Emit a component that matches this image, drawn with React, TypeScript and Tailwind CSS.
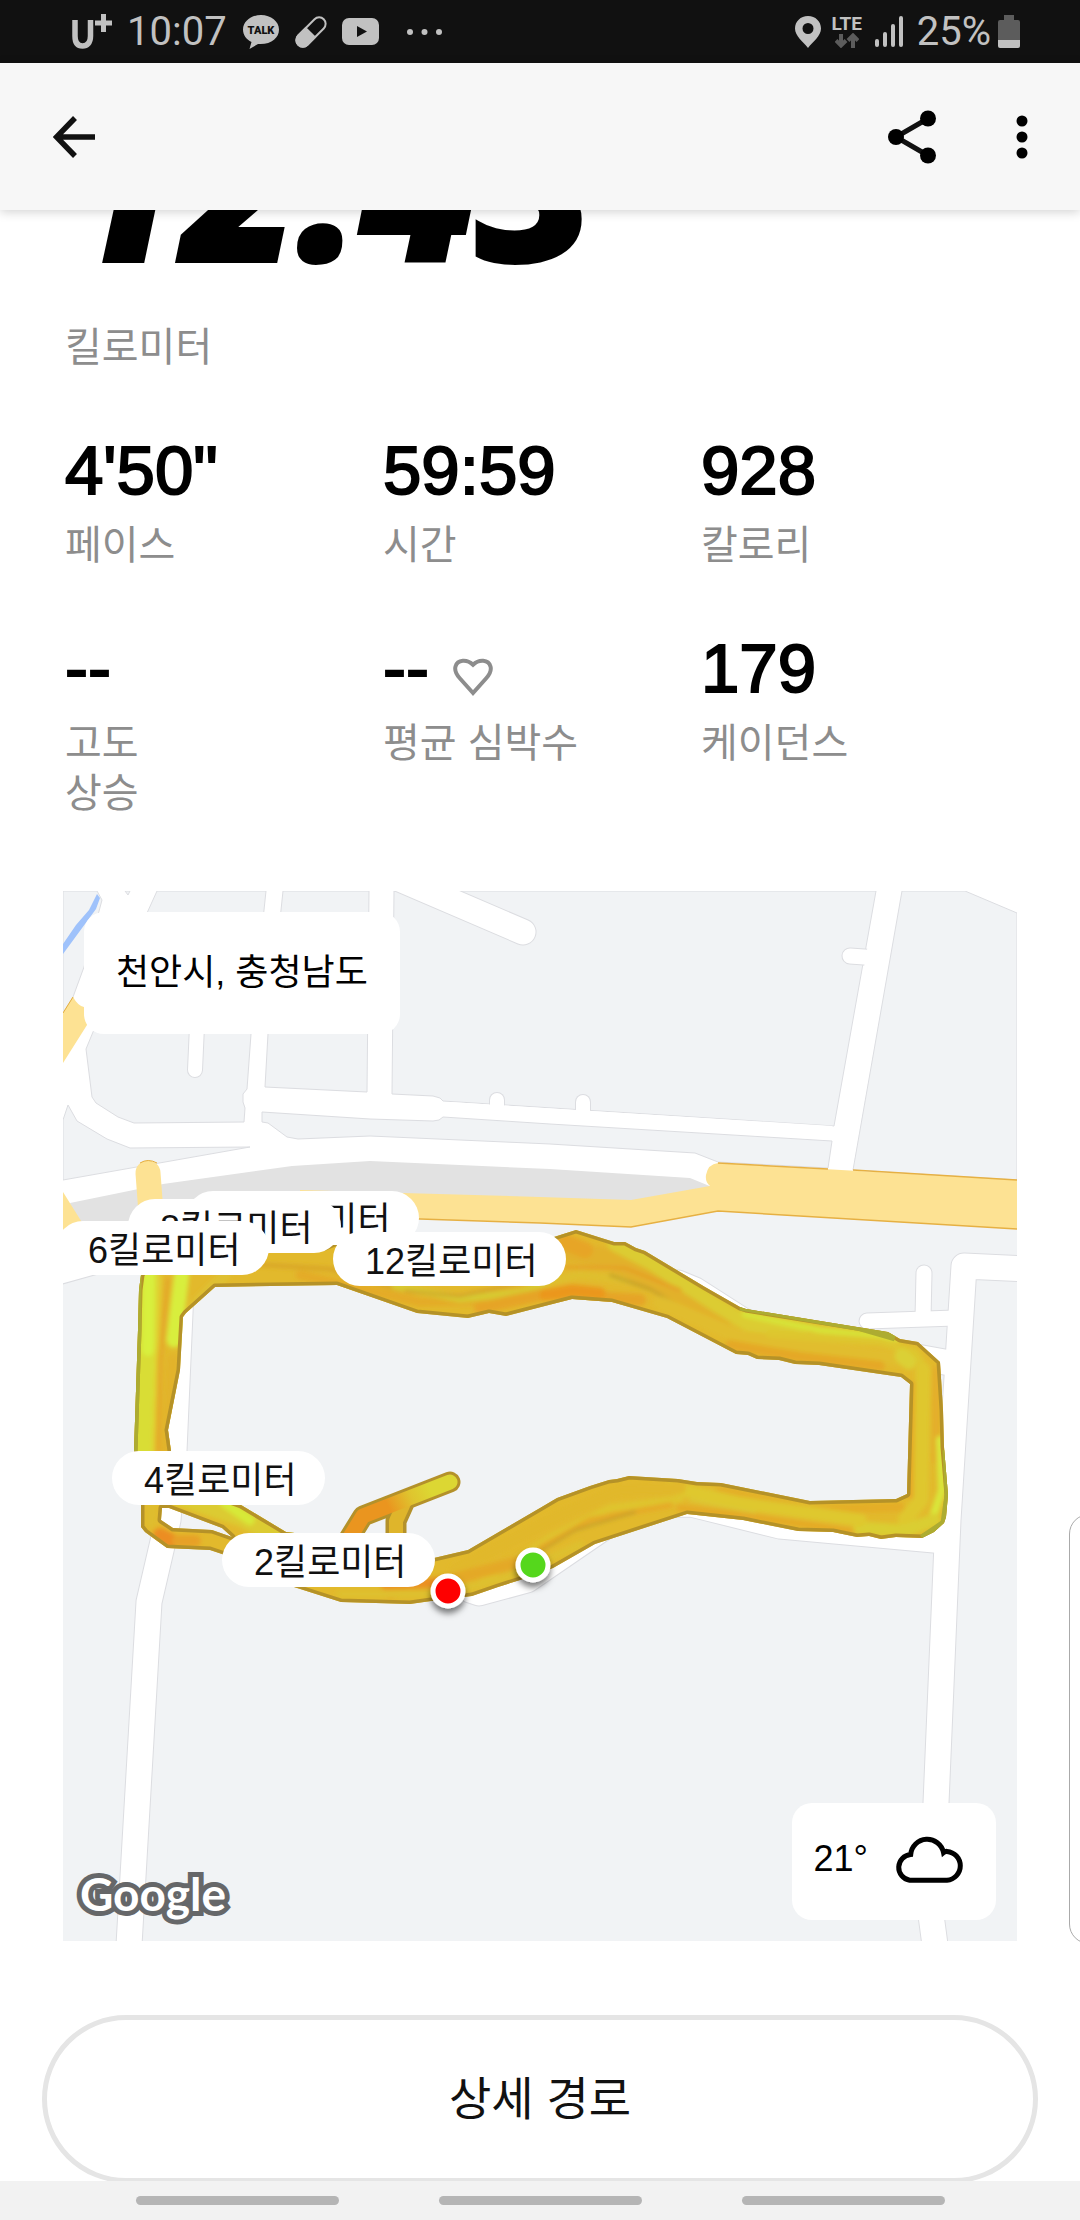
import type { ReactNode } from 'react';

type Stat = {
  value: string;
  label: string;
  icon?: ReactNode;
};

type Marker = {
  x: number;
  y: number;
  text: string;
};

const MAP_W = 954;
const MAP_H = 1050;

const stats: Stat[] = [
  { value: '4\'50"', label: '페이스' },
  { value: '59:59', label: '시간' },
  { value: '928', label: '칼로리' },
  { value: '--', label: '고도\n상승' },
  { value: '--', label: '평균 심박수', icon: <HeartIcon /> },
  { value: '179', label: '케이던스' },
];

// later markers are stacked above earlier ones
const markers: Marker[] = [
  { x: 123, y: 300, text: '10킬로미터' },
  { x: 65, y: 308, text: '8킬로미터' },
  { x: -7, y: 330, text: '6킬로미터' },
  { x: 49, y: 560, text: '4킬로미터' },
  { x: 159, y: 642, text: '2킬로미터' },
  { x: 270, y: 341, text: '12킬로미터' },
];

const blocks = [
  '63,891 97,891 102,900 84,967 73,997 63,1013',
  '125,891 130,891 128,895',
  '157,891 266,891 251,1034 247,1089 243,1094 243,1102 245,1108 244,1122 134,1123 118,1117 96,1103 92,1097 86,1049 93,1032',
  '283,891 369,891 367,1092 265,1087 268,1034',
  '394,891 876,891 834,1126 443,1101 440,1098 433,1096 392,1094',
  '902,891 965,891 1017,913 1017,1180 853,1170',
  '68,1105 77,1121 107,1139 130,1148 250,1147 63,1180 63,1120',
  '262,1112 370,1119 433,1121 439,1120 443,1117 550,1124 832,1141 828,1168 718,1162 695,1153 550,1144 370,1136 298,1139 287,1137 268,1123 262,1122',
];

const roads = [
  { d: 'M395 877L523 932', w: 25 },
  { d: 'M197 1026L195 1070', w: 14 },
  { d: 'M497 1100V1108', w: 14 },
  { d: 'M583 1102V1113', w: 14 },
  { d: 'M850 956L878 958', w: 15 },
  { d: 'M50 1274L100 1260L160 1255', w: 25 },
  { d: 'M181 1290L174 1451L168 1520L149 1602L129 1945', w: 25 },
  { d: 'M470 1590L479 1593L527 1580L600 1530L640 1505L691 1504L780 1526L945 1541', w: 25 },
  { d: 'M678 1283L695 1290L745 1322L850 1345L950 1363', w: 25 },
  { d: 'M924 1273L923 1318', w: 15 },
  { d: 'M867 1321L955 1318', w: 15 },
  { d: 'M1025 1269L964 1266L948 1520L936 1803L931 1915L935 1945', w: 25 },
];

const routeOutline =
  'M141 1275L139 1290L138 1330L134 1451L141 1505L141 1527L145 1532L167 1548L210 1550L222 1554L294 1587L341 1602L410 1604L431 1601L472 1596L498 1587L520 1580L553 1568L595 1544L687 1514L743 1520L798 1531L833 1532L857 1537L869 1536L881 1539L896 1537L922 1538L934 1532L944 1523L946 1517L948 1495L944 1447L943 1410L940 1362L918 1342L900 1339L888 1332L857 1327L746 1309L740 1307L705 1287L645 1251L636 1248L625 1242L614 1242L576 1230L554 1237L500 1250L440 1246L342 1240L325 1247L160 1240Z' +
  'M215 1287L337 1285L417 1313L468 1318L489 1313L506 1316L572 1299L612 1302L667 1318L736 1354L748 1355L757 1359L779 1360L795 1364L819 1365L901 1377L910 1384L907 1494L896 1499L810 1501L721 1483L697 1482L678 1479L629 1476L617 1479L609 1480L590 1486L557 1498L540 1508L468 1550L434 1558L303 1534L286 1532L241 1505L200 1490L171 1451L168 1430L180 1370L183 1317L186 1313Z' +
  'M162 1508L169 1508L222 1528L232 1537L212 1530L173 1528L161 1520Z';

const streaks = [
  { d: 'M148 1265L146 1340L142 1451', w: 20, c: '#d9dd36' },
  { d: 'M149 1270L148 1350', w: 12, c: '#d8f03e' },
  { d: 'M160 1275L153 1460', w: 3, c: '#e2d332' },
  { d: 'M168 1280L160 1360L158 1451', w: 5, c: '#e4a929' },
  { d: 'M182 1272L174 1340', w: 15, c: '#d8ee3e' },
  { d: 'M173 1360L168 1451', w: 12, c: '#e2b32b' },
  { d: 'M195 1305L225 1275', w: 12, c: '#dfc030' },
  { d: 'M250 1264L330 1269L400 1290', w: 4, c: '#d8a427' },
  { d: 'M300 1275L420 1302L520 1300', w: 9, c: '#e4ab28' },
  { d: 'M395 1286L460 1299L520 1293L560 1278', w: 7, c: '#d7ca31' },
  { d: 'M405 1291L460 1296L530 1281', w: 2, c: '#ce9125' },
  { d: 'M480 1308L545 1294L640 1300', w: 12, c: '#e6a426' },
  { d: 'M545 1295L572 1290L600 1293', w: 11, c: '#eb971f' },
  { d: 'M545 1282L580 1275L640 1282L700 1312', w: 7, c: '#dfbf2e' },
  { d: 'M560 1250L610 1258L660 1285L720 1325', w: 20, c: '#e2b12b' },
  { d: 'M565 1242L585 1250', w: 16, c: '#e7a526' },
  { d: 'M615 1244L650 1262L715 1304L750 1325L800 1335', w: 15, c: '#dccc31' },
  { d: 'M565 1267L625 1268L680 1290', w: 3, c: '#e69d25' },
  { d: 'M610 1275L650 1289L680 1306', w: 2, c: '#b49528' },
  { d: 'M660 1303L740 1337L850 1352L905 1360', w: 14, c: '#e1bd2d' },
  { d: 'M745 1314L820 1330L898 1338', w: 7, c: '#d7e338' },
  { d: 'M730 1345L800 1357L880 1366', w: 10, c: '#e5a827' },
  { d: 'M770 1334L880 1342L915 1352L927 1372', w: 8, c: '#dec62f' },
  { d: 'M902 1356L909 1362', w: 15, c: '#dbd034' },
  { d: 'M914 1385L911 1495', w: 8, c: '#e6a928' },
  { d: 'M923 1370L921 1500L905 1520', w: 15, c: '#dfc72f' },
  { d: 'M936 1370L936 1460', w: 8, c: '#e4ae29' },
  { d: 'M940 1440L942 1490L932 1520', w: 8, c: '#d9e63b' },
  { d: 'M934 1520L905 1531L860 1528', w: 13, c: '#dace31' },
  { d: 'M900 1507L810 1510L720 1491', w: 9, c: '#e4ad28' },
  { d: 'M670 1487L740 1503L860 1520', w: 13, c: '#dfc82f' },
  { d: 'M680 1508L760 1518L850 1531', w: 7, c: '#e5aa27' },
  { d: 'M690 1500L755 1512', w: 2, c: '#d9cc38' },
  { d: 'M455 1570L560 1515L620 1490L680 1488', w: 12, c: '#e1b82b' },
  { d: 'M480 1583L550 1538L610 1508L680 1499', w: 7, c: '#dfc52e' },
  { d: 'M540 1548L590 1520L670 1505', w: 5, c: '#e6a926' },
  { d: 'M536 1554L575 1530L635 1512', w: 2, c: '#b99a29' },
  { d: 'M390 1594L450 1580L520 1562', w: 12, c: '#e4a928' },
  { d: 'M385 1585L440 1582', w: 9, c: '#eb8f20' },
  { d: 'M340 1594L440 1594L500 1580L580 1545', w: 8, c: '#dec02e' },
  { d: 'M180 1495L240 1515L300 1545', w: 22, c: '#dccb31' },
  { d: 'M225 1503L250 1520', w: 10, c: '#d7e939' },
  { d: 'M152 1505L151 1522', w: 11, c: '#dfbd2e' },
  { d: 'M160 1535L172 1541', w: 14, c: '#ec8d20' },
  { d: 'M178 1541L195 1541', w: 12, c: '#e7a127' },
];

function HeartIcon() {
  return (
    <svg viewBox="0 0 40 38" className="ml-6 mt-4 h-[38px] w-[40px]" aria-hidden="true">
      <path
        d="M20 35L7 20.500C3 16 1.500 12 2.500 8.500C4.500 1.500 14 1 20 6.800C26 1 35.500 1.500 37.500 8.500C38.500 12 37 16 33 20.500Z"
        fill="none"
        stroke="#8d8d8d"
        strokeWidth="4"
      />
    </svg>
  );
}

function StatusBar() {
  return (
    <div className="flex h-[63px] shrink-0 items-center justify-between bg-[#111] pl-[71px] pr-[60px] font-['Roboto',sans-serif] text-[40px] leading-[48px] text-[#c1c1c1]">
      <div className="flex items-center">
        <svg viewBox="0 0 42 36" className="h-[36px] w-[42px]" role="img" aria-label="U+">
          <path d="M4 6V22C4 29 7 32 11.500 32C16 32 19.500 29 19.500 22V6" fill="none" stroke="currentColor" strokeWidth="5.500" />
          <path d="M24 9H41M32.500 0V18" stroke="currentColor" strokeWidth="5" />
        </svg>
        <span className="ml-[14px]">10:07</span>
        <svg viewBox="0 0 36 34" className="ml-4 h-[34px] w-[36px]" aria-hidden="true">
          <path d="M18 0C8 0 0 6.500 0 14.500C0 20 3.500 24.500 8.500 27L6.500 34L15 29C28 30 36 23 36 14.500C36 6.500 28 0 18 0Z" fill="currentColor" />
          <text x="18" y="19" textAnchor="middle" fontSize="11" fontWeight="900" fontFamily="Roboto, sans-serif" fill="#111">
            TALK
          </text>
        </svg>
        <svg viewBox="0 0 32 32" className="ml-4 h-[32px] w-[32px]" aria-hidden="true">
          <g transform="rotate(45 16 16)">
            <rect x="9.500" y="-2" width="13" height="36" rx="6.500" fill="none" stroke="currentColor" strokeWidth="2" />
            <path d="M8.500 16H23.500V27.500A7.500 7.500 0 0 1 8.500 27.500Z" fill="currentColor" />
          </g>
        </svg>
        <svg viewBox="0 0 37 27" className="ml-[15px] h-[27px] w-[37px]" aria-hidden="true">
          <rect width="37" height="27" rx="7" fill="currentColor" />
          <path d="M15 8L25 13.500L15 19Z" fill="#111" />
        </svg>
        <svg viewBox="0 0 35 6" className="ml-7 h-[6px] w-[35px]" fill="currentColor" aria-hidden="true">
          <circle cx="3" cy="3" r="3" />
          <circle cx="17.500" cy="3" r="3" />
          <circle cx="32" cy="3" r="3" />
        </svg>
      </div>
      <div className="flex items-center">
        <svg viewBox="0 0 26 32" className="h-[32px] w-[26px]" aria-hidden="true">
          <path fillRule="evenodd" d="M13 0C5.500 0 0 5.500 0 12.500C0 20 8 25.500 13 32C18 25.500 26 20 26 12.500C26 5.500 20.500 0 13 0ZM13 7A5.500 5.500 0 1 1 13 18A5.500 5.500 0 0 1 13 7Z" fill="currentColor" />
        </svg>
        <div className="ml-[10px] flex w-[32px] flex-col items-center">
          <span className="text-[19px] font-bold leading-[18px]">LTE</span>
          <svg viewBox="0 0 24 15" className="h-[15px] w-[24px]" fill="none" stroke="#5c5c5c" strokeWidth="4" aria-hidden="true">
            <path d="M6 1V12M1 7.500L6 12.500L11 7.500" />
            <path d="M18 15V3M13 7.500L18 2.500L23 7.500" />
          </svg>
        </div>
        <svg viewBox="0 0 28 31" className="ml-3 h-[31px] w-[28px]" fill="currentColor" aria-hidden="true">
          <rect y="23" width="4" height="8" rx="2" />
          <rect x="8" y="16" width="4" height="15" rx="2" />
          <rect x="16" y="8" width="4" height="23" rx="2" />
          <rect x="24" width="4" height="31" rx="2" />
        </svg>
        <span className="ml-[14px]">25%</span>
        <svg viewBox="0 0 22 33" className="ml-[7px] h-[33px] w-[22px]" aria-hidden="true">
          <path d="M6 0H16V5H20Q22 5 22 7V25H0V7Q0 5 2 5H6Z" fill="#5c5c5c" />
          <path d="M0 25H22V31Q22 33 20 33H2Q0 33 0 31Z" fill="currentColor" />
        </svg>
      </div>
    </div>
  );
}

function AppBar() {
  return (
    <header className="relative z-10 flex h-[147px] shrink-0 items-center justify-between bg-[#f7f7f7] pl-[43px] pr-[42px] text-[#111] shadow-[0_2px_10px_rgba(0,0,0,0.18)]">
      <button type="button" aria-label="뒤로" className="p-[10px]">
        <svg viewBox="0 0 42 42" className="h-[42px] w-[42px]" fill="none" stroke="currentColor" strokeWidth="5.500" aria-hidden="true">
          <path d="M22 2L3.500 21L22 40M4 21H42" />
        </svg>
      </button>
      <div className="flex items-center">
        <button type="button" aria-label="공유" className="p-[10px]">
          <svg viewBox="0 0 48 54" className="h-[54px] w-[48px]" aria-hidden="true">
            <path d="M40 8.500L8 27L40 45.500" fill="none" stroke="currentColor" strokeWidth="5" />
            <circle cx="40" cy="8.500" r="8" />
            <circle cx="8" cy="27" r="8" />
            <circle cx="40" cy="45.500" r="8" />
          </svg>
        </button>
        <button type="button" aria-label="더보기" className="ml-[60px] p-[10px]">
          <svg viewBox="0 0 12 44" className="h-[44px] w-[12px]" aria-hidden="true">
            <circle cx="6" cy="6" r="5.500" />
            <circle cx="6" cy="22" r="5.500" />
            <circle cx="6" cy="38" r="5.500" />
          </svg>
        </button>
      </div>
    </header>
  );
}

function MapCanvas() {
  return (
    <svg viewBox="63 891 954 1050" className="block h-full w-full" aria-hidden="true">
      <defs>
        <clipPath id="route">
          <path d={routeOutline} clipRule="evenodd" />
        </clipPath>
        <linearGradient id="spur" gradientUnits="userSpaceOnUse" x1="350" y1="1530" x2="450" y2="1480">
          <stop offset="0.400" stopColor="#ea951f" />
          <stop offset="0.620" stopColor="#dfc42e" />
          <stop offset="0.800" stopColor="#dcd733" />
        </linearGradient>
        <filter id="soften">
          <feGaussianBlur stdDeviation="2" />
        </filter>
      </defs>

      <rect x="63" y="891" width="954" height="1050" fill="#fff" />
      <g fill="#f1f3f5" stroke="#dcdde1" strokeWidth="1">
        {blocks.map((points) => (
          <polygon key={points} points={points} />
        ))}
        <path d="M55 1215L300 1213L540 1222L631 1226L718 1210L1025 1228V1950H55Z" />
      </g>

      <path d="M97 894L100 898L96 909L63 954V944L76 925L89 910Z" fill="#9fc2fb" />
      <path d="M70 1203L163 1184L292 1166L370 1161L550 1169L690 1178L712 1187L631 1203L300 1200V1240H80Z" fill="#e2e2e2" />
      <path d="M63 1013L73 997Q78 1006 84 1007L87 1025L63 1063Z" fill="#fde293" />
      <path d="M63 1013L73 997" stroke="#e5ad3c" />
      <path d="M63 1192L83 1224V1235H63Z" fill="#fde293" />
      <path d="M148 1173L153 1240" stroke="#fde293" strokeWidth="25" strokeLinecap="round" />
      <path d="M140 1163Q148 1158 157 1163" fill="none" stroke="#e5ad3c" />
      <path d="M300 1190L403 1193L540 1197L631 1200L710 1186Q705 1182 706 1175Q708 1164 718 1163L1017 1180V1229L718 1211L631 1227L540 1223L300 1215Z" fill="#fde293" />
      <path d="M718 1163L828 1169M853 1170L1017 1180M1017 1229L718 1211L631 1227L540 1223L300 1215" fill="none" stroke="#e6b043" strokeWidth="1.500" />

      <g fill="none" strokeLinecap="round" strokeLinejoin="round">
        {roads.map((road) => (
          <path key={road.d} d={road.d} stroke="#dcdde1" strokeWidth={road.w + 2} />
        ))}
        {roads.map((road) => (
          <path key={road.d} d={road.d} stroke="#fff" strokeWidth={road.w} />
        ))}
      </g>
      {/* clears the junctions where the short stubs run into a road */}
      <path d="M450 1109L832 1133" stroke="#fff" strokeWidth="14" />
      <path d="M889 891L841 1166" stroke="#fff" strokeWidth="23" />

      {/* side spur sits below the main loop */}
      <g fill="none" strokeLinecap="round" strokeLinejoin="round">
        <path d="M342 1550L363 1516L450 1482M396 1550V1521L405 1501" stroke="#b4912a" strokeWidth="21" />
        <path d="M396 1550V1521L405 1501" stroke="#dfb52b" strokeWidth="14" />
        <path d="M342 1550L363 1516L450 1482" stroke="url(#spur)" strokeWidth="15" />
      </g>
      <path d={routeOutline} fill="#e2b92c" fillRule="evenodd" />
      <g clipPath="url(#route)">
        <g fill="none" strokeLinecap="round" strokeLinejoin="round" filter="url(#soften)">
          {streaks.map((streak) => (
            <path key={streak.d} d={streak.d} stroke={streak.c} strokeWidth={streak.w} />
          ))}
        </g>
        <path d={routeOutline} fill="none" stroke="#b59228" strokeWidth="7" strokeLinejoin="round" />
        <path d="M138 1275L138 1330L134 1451M740 1307L857 1327L895 1338M946 1450L948 1495L944 1523L922 1538" fill="none" stroke="#adac31" strokeWidth="7" />
      </g>

      <text
        x="80"
        y="1911"
        fontSize="46"
        fontWeight="700"
        fontFamily="Lato, sans-serif"
        fill="#fff"
        stroke="#666769"
        strokeWidth="10"
        paintOrder="stroke"
      >
        Google
      </text>
    </svg>
  );
}

// start and finish pins
function RoutePins() {
  return (
    <svg viewBox="63 891 954 1050" className="absolute inset-0 h-full w-full" aria-hidden="true">
      <defs>
        <filter id="drop" x="-50%" y="-50%" width="200%" height="200%">
          <feDropShadow dx="0" dy="5" stdDeviation="3" floodOpacity="0.500" />
        </filter>
      </defs>
      <g filter="url(#drop)" stroke="#fff" strokeWidth="5">
        <circle cx="533" cy="1565" r="15" fill="#54d71a" />
        <circle cx="448" cy="1591" r="15" fill="#fe0000" />
      </g>
    </svg>
  );
}

function RouteMap() {
  return (
    <section aria-label="경로 지도" className="relative mt-[73px] aspect-[954/1050] w-full overflow-hidden text-[36px] leading-[48px]">
      <MapCanvas />
      {markers.map((marker) => (
        <div
          key={marker.text}
          className="absolute whitespace-nowrap rounded-full bg-white pl-8 pr-7 pt-[6px] text-[#111]"
          style={{ left: `${(marker.x / MAP_W) * 100}%`, top: `${(marker.y / MAP_H) * 100}%` }}
        >
          {marker.text}
        </div>
      ))}
      <RoutePins />
      <div className="absolute left-[21px] top-[21px] rounded-[20px] bg-white px-8 py-[37px]">천안시, 충청남도</div>
      <div className="absolute bottom-[21px] right-[21px] flex h-[117px] items-center rounded-[20px] bg-white pb-[6px] pl-[22px] pr-8">
        <span>21°</span>
        <svg viewBox="0 0 70 48" className="ml-[26px] h-[48px] w-[70px]" fill="none" stroke="currentColor" strokeWidth="5" role="img" aria-label="흐림">
          <path d="M15.700 45.300H53A14.500 14.500 0 0 0 53 16.400Q51 16.200 49.500 17.500A16.600 16.600 0 0 0 16.700 19.500A13 13 0 0 0 15.700 45.300Z" />
        </svg>
      </div>
    </section>
  );
}

export default function App() {
  return (
    <div className="relative flex h-screen flex-col overflow-hidden bg-white font-['Liberation_Sans','Noto_Sans_CJK_KR',sans-serif] text-black">
      <StatusBar />
      <AppBar />
      <main className="min-h-0 flex-1 overflow-y-auto [scrollbar-width:none]">
        <div className="px-[63px]">
          <h1 className="-mt-[126px] pl-[4px] font-['Open_Sans',sans-serif] text-[200px] font-extrabold italic leading-[200px] [-webkit-text-stroke:4px_black]">12.43</h1>
          <p className="ml-[2px] mt-[38px] text-[40px] leading-[50px] text-[#8d8d8d]">킬로미터</p>
          <dl className="-mr-[2px] ml-[2px] mt-[63px] grid grid-cols-3 gap-y-[63px]">
            {stats.map((stat) => (
              <div key={stat.label} className="flex flex-col-reverse justify-end">
                <dt className="mt-[13px] whitespace-pre-line text-[40px] leading-[50px] text-[#8d8d8d]">{stat.label}</dt>
                <dd className="flex items-center text-[69px] leading-[72px] [-webkit-text-stroke:2px_black]">
                  {stat.value}
                  {stat.icon}
                </dd>
              </div>
            ))}
          </dl>
          <RouteMap />
        </div>
        <div className="mt-[74px] px-[42px]">
          <button type="button" className="h-[168px] w-full rounded-full border-[5px] border-[#e5e5e5] text-[46px] text-[#111]">
            상세 경로
          </button>
        </div>
      </main>
      <nav className="flex h-[39px] shrink-0 items-center justify-center gap-[100px] bg-[#f2f2f2]">
        <button type="button" aria-label="최근 앱" className="h-[9px] w-[203px] rounded-full bg-[#b5b5b5]" />
        <button type="button" aria-label="홈" className="h-[9px] w-[203px] rounded-full bg-[#b5b5b5]" />
        <button type="button" aria-label="이전" className="h-[9px] w-[203px] rounded-full bg-[#b5b5b5]" />
      </nav>
      {/* edge panel handle */}
      <div className="absolute -right-[13px] top-[1514px] h-[430px] w-[24px] rounded-l-[20px] border border-[#aaa] bg-white/80" />
    </div>
  );
}
